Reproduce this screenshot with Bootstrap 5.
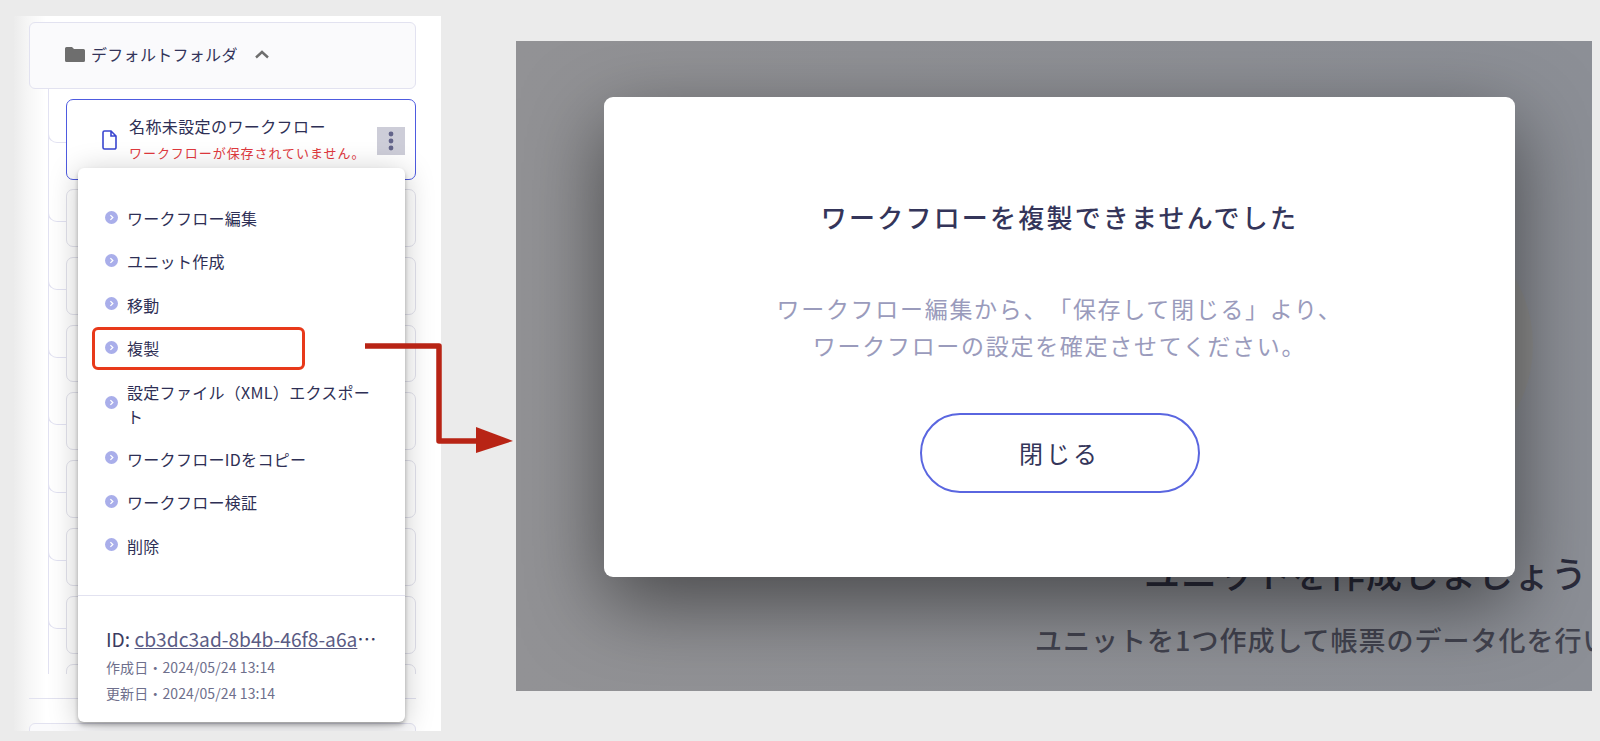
<!DOCTYPE html>
<html lang="ja">
<head>
    <meta charset="UTF-8">
    <meta name="viewport" content="width=device-width, initial-scale=1.0">
    <title>ワークフロー複製</title>
    <link href="https://cdn.jsdelivr.net/npm/bootstrap@5.3.3/dist/css/bootstrap.min.css" rel="stylesheet">
    <style>
        html, body { height: 100%; }
        body {
            background: #ebebeb;
            color: #33345a;
            font-family: "Noto Sans CJK JP", "Noto Sans", sans-serif;
            overflow: hidden;
            position: relative;
            text-spacing-trim: space-all;
        }
        .page-wrap { padding: 16px 0 0 14px; gap: 75px; }

        /* left side */
        .side-panel {
            width: 427px;
            height: 715px;
            background: linear-gradient(90deg, #ececec 0, #f6f6f6 14px, #fff 32px);
            position: relative;
            overflow: hidden;
            padding: 6px 25px 0 15px;
        }
        .folder-row {
            height: 67px;
            background: #fafafc;
            border: 1px solid #e2e2f0;
            border-radius: 6px;
            padding: 0 0 3px 35px;
            font-size: 16px;
            letter-spacing: .3px;
        }
        .folder-name { margin: 0 17px 0 6px; }
        .tree-wrap {
            height: 585px;
            margin-left: 19px;
            border-left: 1px solid #e2e2f2;
            padding: 10px 0 0 17px;
            overflow: hidden;
        }
        .flow-item {
            height: 57.8px;
            margin-bottom: 10px;
            border: 1px solid #e2e2ec;
            border-radius: 7px;
            background: #fff;
            position: relative;
        }
        .flow-item::before {
            content: "";
            position: absolute;
            left: -19px;
            top: 18px;
            width: 18px;
            height: 14px;
            border-left: 1px solid #e2e2f2;
            border-bottom: 1px solid #e2e2f2;
            border-bottom-left-radius: 9px;
        }
        .flow-item.is-open {
            height: 81px;
            margin-bottom: 9px;
            border-color: #4e5be0;
            padding: 12px 10px 0 35px;
        }
        .flow-item.is-open::before { top: 29px; }
        .flow-title { font-size: 16px; line-height: 29px; letter-spacing: .4px; color: #2e2f55; }
        .flow-note { font-size: 13px; line-height: 24px; letter-spacing: .95px; color: #e0393e; }
        .file-icon { margin-right: 12px; margin-top: 18px; }
        .more-btn {
            width: 28px;
            height: 28px;
            background: #cdcdd8;
            margin-top: 15px;
            margin-left: auto;
        }
        .side-rule { margin: 24px 0 24px; border-top: 1px solid #e2e2f0; }
        .next-folder {
            height: 40px;
            border: 1px solid #e2e2f0;
            border-radius: 6px;
            background: #fafafc;
        }

        /* popup menu */
        .pop-menu {
            position: absolute;
            left: 64px;
            top: 152px;
            width: 327px;
            height: 554px;
            background: #fff;
            border-radius: 6px;
            box-shadow: 0 3px 4px rgba(0, 0, 0, .28), 0 4px 30px rgba(0, 0, 0, .22);
        }
        .menu-list { padding: 38px 26px 0 27px; margin: 0; height: 428px; border-bottom: 1px solid #e2e2f0; }
        .menu-line {
            gap: 9px;
            font-size: 16px;
            line-height: 24px;
            letter-spacing: .3px;
            margin-bottom: 19.4px;
            color: #2e2f55;
            position: relative;
        }
        .menu-line.is-marked::after {
            content: "";
            position: absolute;
            left: -13px;
            top: -9px;
            width: 213px;
            height: 43px;
            border: 3px solid #e8391a;
            border-radius: 6px;
        }
        .menu-dot { flex: none; margin-top: -2px; }
        .menu-foot { padding: 30px 20px 0 28px; }
        .id-line { font-size: 19.2px; line-height: 26px; margin-bottom: 2px; color: #3a3b60; }
        .id-line a { color: #5a5b84; }
        .date-line { font-size: 14px; line-height: 26px; color: #6e6f8c; letter-spacing: .1px; }

        /* right side */
        .shot-panel {
            width: 1076px;
            height: 650px;
            margin-top: 25px;
            background: linear-gradient(90deg, #929295, #8c8f96);
            position: relative;
            overflow: hidden;
            white-space: nowrap;
            padding: 507px 0 0 628px;
        }
        .back-circle {
            position: absolute;
            left: 751px;
            top: 171px;
            width: 266px;
            height: 266px;
            border-radius: 50%;
            background: #8f8f8f;
        }
        .back-title { font-size: 36px; line-height: 48px; letter-spacing: 1px; font-weight: 500; color: #2b2c3c; position: relative; }
        .back-text { font-size: 27px; line-height: 38px; letter-spacing: 1px; font-weight: 500; color: #42434f; margin: 25px 0 0 -109px; position: relative; }
        .warn-modal {
            position: absolute;
            left: 88px;
            top: 56px;
            width: 911px;
            height: 480px;
            background: #fff;
            border-radius: 9px;
            box-shadow: 0 26px 80px rgba(0, 0, 0, .5);
            padding-top: 96px;
        }
        .warn-title { font-size: 26px; line-height: 48px; letter-spacing: 2.2px; font-weight: 500; color: #34355a; margin: 0 0 49px; }
        .warn-text { font-size: 23px; line-height: 37px; letter-spacing: 1.7px; color: #9a9bbc; margin: 0 0 49px; }
        .close-btn {
            width: 280px;
            height: 80px;
            border: 2px solid #5a66e0;
            background: #fff;
            font-size: 24px;
            letter-spacing: 3px;
            color: #34355a;
        }

        /* arrow between the two shots */
        .jump-arrow { position: absolute; left: 360px; top: 340px; }
    </style>
</head>
<body>
    <div class="d-flex page-wrap">
        <div class="side-panel">
            <div class="folder-row d-flex align-items-center">
                <svg width="20" height="15" viewBox="0 0 20 15"><path d="M1.5 0h5.5l2 2h9.500a1.500 1.500 0 0 1 1.500 1.500v10a1.500 1.500 0 0 1-1.500 1.500h-17a1.500 1.500 0 0 1-1.500-1.500v-12a1.500 1.500 0 0 1 1.500-1.500z" fill="#6e6e6e"/></svg>
                <span class="folder-name">デフォルトフォルダ</span>
                <svg width="14" height="9" viewBox="0 0 14 9"><path d="M1 7.500l6-5.500 6 5.500" fill="none" stroke="#6e6e6e" stroke-width="2.400"/></svg>
            </div>
            <div class="tree-wrap">
                <div class="flow-item is-open d-flex">
                    <svg class="file-icon" width="15" height="20" viewBox="0 0 15 20"><path d="M2.500 1h6.500l5 5v11.500a1.500 1.500 0 0 1-1.500 1.500h-10a1.500 1.500 0 0 1-1.500-1.500v-15a1.500 1.500 0 0 1 1.500-1.500zM9 1v5h5" fill="#fff" stroke="#3a46d0" stroke-width="1.600"/></svg>
                    <div>
                        <div class="flow-title">名称未設定のワークフロー</div>
                        <div class="flow-note">ワークフローが保存されていません。</div>
                    </div>
                    <div class="more-btn d-flex align-items-center justify-content-center">
                        <svg width="6" height="20" viewBox="0 0 6 20"><circle cx="3" cy="3" r="2.400" fill="#63648a"/><circle cx="3" cy="10" r="2.400" fill="#63648a"/><circle cx="3" cy="17" r="2.400" fill="#63648a"/></svg>
                    </div>
                </div>
                <div class="flow-item"></div>
                <div class="flow-item"></div>
                <div class="flow-item"></div>
                <div class="flow-item"></div>
                <div class="flow-item"></div>
                <div class="flow-item"></div>
                <div class="flow-item"></div>
                <div class="flow-item"></div>
            </div>
            <div class="side-rule"></div>
            <div class="next-folder"></div>

            <div class="pop-menu">
                <ul class="menu-list list-unstyled">
                    <li class="menu-line d-flex align-items-center">
                        <svg class="menu-dot" width="13" height="13" viewBox="0 0 12 12"><circle cx="6" cy="6" r="6" fill="#a9aeea"/><path d="M5 3.800l2.200 2.200-2.200 2.200" fill="none" stroke="#fff" stroke-width="1.200"/></svg>
                        <span>ワークフロー編集</span>
                    </li>
                    <li class="menu-line d-flex align-items-center">
                        <svg class="menu-dot" width="13" height="13" viewBox="0 0 12 12"><circle cx="6" cy="6" r="6" fill="#a9aeea"/><path d="M5 3.800l2.200 2.200-2.200 2.200" fill="none" stroke="#fff" stroke-width="1.200"/></svg>
                        <span>ユニット作成</span>
                    </li>
                    <li class="menu-line d-flex align-items-center">
                        <svg class="menu-dot" width="13" height="13" viewBox="0 0 12 12"><circle cx="6" cy="6" r="6" fill="#a9aeea"/><path d="M5 3.800l2.200 2.200-2.200 2.200" fill="none" stroke="#fff" stroke-width="1.200"/></svg>
                        <span>移動</span>
                    </li>
                    <li class="menu-line is-marked d-flex align-items-center">
                        <svg class="menu-dot" width="13" height="13" viewBox="0 0 12 12"><circle cx="6" cy="6" r="6" fill="#a9aeea"/><path d="M5 3.800l2.200 2.200-2.200 2.200" fill="none" stroke="#fff" stroke-width="1.200"/></svg>
                        <span>複製</span>
                    </li>
                    <li class="menu-line d-flex align-items-center">
                        <svg class="menu-dot" width="13" height="13" viewBox="0 0 12 12"><circle cx="6" cy="6" r="6" fill="#a9aeea"/><path d="M5 3.800l2.200 2.200-2.200 2.200" fill="none" stroke="#fff" stroke-width="1.200"/></svg>
                        <span>設定ファイル（XML）エクスポート</span>
                    </li>
                    <li class="menu-line d-flex align-items-center">
                        <svg class="menu-dot" width="13" height="13" viewBox="0 0 12 12"><circle cx="6" cy="6" r="6" fill="#a9aeea"/><path d="M5 3.800l2.200 2.200-2.200 2.200" fill="none" stroke="#fff" stroke-width="1.200"/></svg>
                        <span>ワークフローIDをコピー</span>
                    </li>
                    <li class="menu-line d-flex align-items-center">
                        <svg class="menu-dot" width="13" height="13" viewBox="0 0 12 12"><circle cx="6" cy="6" r="6" fill="#a9aeea"/><path d="M5 3.800l2.200 2.200-2.200 2.200" fill="none" stroke="#fff" stroke-width="1.200"/></svg>
                        <span>ワークフロー検証</span>
                    </li>
                    <li class="menu-line d-flex align-items-center">
                        <svg class="menu-dot" width="13" height="13" viewBox="0 0 12 12"><circle cx="6" cy="6" r="6" fill="#a9aeea"/><path d="M5 3.800l2.200 2.200-2.200 2.200" fill="none" stroke="#fff" stroke-width="1.200"/></svg>
                        <span>削除</span>
                    </li>
                </ul>
                <div class="menu-foot">
                    <div class="id-line text-nowrap">ID: <a href="#">cb3dc3ad-8b4b-46f8-a6a</a>…</div>
                    <div class="date-line">作成日・2024/05/24 13:14</div>
                    <div class="date-line">更新日・2024/05/24 13:14</div>
                </div>
            </div>
        </div>

        <div class="shot-panel">
            <div class="back-circle"></div>
            <div class="back-title">ユニットを作成しましょう</div>
            <div class="back-text">ユニットを1つ作成して帳票のデータ化を行い</div>
            <div class="warn-modal text-center">
                <h2 class="warn-title">ワークフローを複製できませんでした</h2>
                <p class="warn-text">ワークフロー編集から、「保存して閉じる」より、<br>ワークフローの設定を確定させてください。</p>
                <button type="button" class="btn rounded-pill close-btn">閉じる</button>
            </div>
        </div>
    </div>

    <svg class="jump-arrow" width="156" height="116" viewBox="0 0 156 116"><path d="M5 6h74v95h40" fill="none" stroke="#b82415" stroke-width="5.500" stroke-linejoin="round"/><path d="M116 87l37 14-37 12z" fill="#b82415"/></svg>

    <script src="https://cdn.jsdelivr.net/npm/bootstrap@5.3.3/dist/js/bootstrap.bundle.min.js"></script>
</body>
</html>
